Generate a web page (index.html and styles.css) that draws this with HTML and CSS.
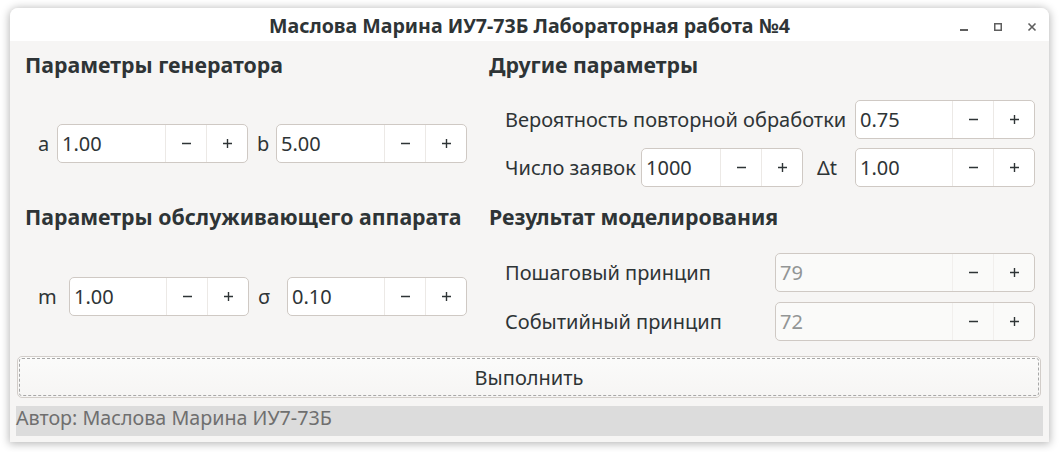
FILE: index.html
```html
<!DOCTYPE html>
<html lang="ru">
<head>
<meta charset="utf-8">
<title>Лабораторная работа №4</title>
<link rel="stylesheet" href="styles.css">
</head>
<body>
<div class="window">
  <header class="titlebar">
    <div class="tb-side"></div>
    <div class="title">Маслова Марина ИУ7-73Б Лабораторная работа №4</div>
    <div class="tb-side controls">
      <span class="ctl"><svg width="10" height="10" viewBox="0 0 10 10"><rect x="1" y="7" width="8" height="2" fill="#5e5e5e"/></svg></span>
      <span class="ctl"><svg width="10" height="10" viewBox="0 0 10 10"><rect x="1.75" y="1.75" width="6.5" height="6.5" fill="none" stroke="#5e5e5e" stroke-width="1.5"/></svg></span>
      <span class="ctl"><svg width="10" height="10" viewBox="0 0 10 10"><path d="M1.5 1.5 L8.5 8.5 M8.5 1.5 L1.5 8.5" stroke="#5e5e5e" stroke-width="1.6"/></svg></span>
    </div>
  </header>

  <main class="content">
    <div class="panels">
      <section class="col col-left">
        <h2 class="heading">Параметры генератора</h2>
        <div class="row row-ab">
          <span class="lbl lbl-a">a</span>
          <div class="spin w191">
            <span class="val">1.00</span>
            <span class="btn"><svg width="11" height="11" viewBox="0 0 11 11"><path d="M1 5.5 H10" stroke="#2e3436" stroke-width="1.4"/></svg></span>
            <span class="btn"><svg width="11" height="11" viewBox="0 0 11 11"><path d="M1 5.5 H10 M5.5 1 V10" stroke="#2e3436" stroke-width="1.4"/></svg></span>
          </div>
          <span class="lbl lbl-b">b</span>
          <div class="spin w191">
            <span class="val">5.00</span>
            <span class="btn"><svg width="11" height="11" viewBox="0 0 11 11"><path d="M1 5.5 H10" stroke="#2e3436" stroke-width="1.4"/></svg></span>
            <span class="btn"><svg width="11" height="11" viewBox="0 0 11 11"><path d="M1 5.5 H10 M5.5 1 V10" stroke="#2e3436" stroke-width="1.4"/></svg></span>
          </div>
        </div>

        <h2 class="heading heading-2l">Параметры обслуживающего аппарата</h2>
        <div class="row row-m">
          <span class="lbl lbl-m">m</span>
          <div class="spin w180">
            <span class="val">1.00</span>
            <span class="btn"><svg width="11" height="11" viewBox="0 0 11 11"><path d="M1 5.5 H10" stroke="#2e3436" stroke-width="1.4"/></svg></span>
            <span class="btn"><svg width="11" height="11" viewBox="0 0 11 11"><path d="M1 5.5 H10 M5.5 1 V10" stroke="#2e3436" stroke-width="1.4"/></svg></span>
          </div>
          <span class="lbl lbl-s">σ</span>
          <div class="spin w180">
            <span class="val">0.10</span>
            <span class="btn"><svg width="11" height="11" viewBox="0 0 11 11"><path d="M1 5.5 H10" stroke="#2e3436" stroke-width="1.4"/></svg></span>
            <span class="btn"><svg width="11" height="11" viewBox="0 0 11 11"><path d="M1 5.5 H10 M5.5 1 V10" stroke="#2e3436" stroke-width="1.4"/></svg></span>
          </div>
        </div>
      </section>

      <section class="col col-right">
        <h2 class="heading">Другие параметры</h2>
        <div class="rrow rrow-1">
          <span class="lbl lbl-prob">Вероятность повторной обработки</span>
          <div class="spin w180">
            <span class="val">0.75</span>
            <span class="btn"><svg width="11" height="11" viewBox="0 0 11 11"><path d="M1 5.5 H10" stroke="#2e3436" stroke-width="1.4"/></svg></span>
            <span class="btn"><svg width="11" height="11" viewBox="0 0 11 11"><path d="M1 5.5 H10 M5.5 1 V10" stroke="#2e3436" stroke-width="1.4"/></svg></span>
          </div>
        </div>
        <div class="rrow rrow-2">
          <span class="lbl lbl-count">Число заявок</span>
          <div class="spin w162">
            <span class="val">1000</span>
            <span class="btn"><svg width="11" height="11" viewBox="0 0 11 11"><path d="M1 5.5 H10" stroke="#2e3436" stroke-width="1.4"/></svg></span>
            <span class="btn"><svg width="11" height="11" viewBox="0 0 11 11"><path d="M1 5.5 H10 M5.5 1 V10" stroke="#2e3436" stroke-width="1.4"/></svg></span>
          </div>
          <span class="lbl lbl-dt">Δt</span>
          <div class="spin w180">
            <span class="val">1.00</span>
            <span class="btn"><svg width="11" height="11" viewBox="0 0 11 11"><path d="M1 5.5 H10" stroke="#2e3436" stroke-width="1.4"/></svg></span>
            <span class="btn"><svg width="11" height="11" viewBox="0 0 11 11"><path d="M1 5.5 H10 M5.5 1 V10" stroke="#2e3436" stroke-width="1.4"/></svg></span>
          </div>
        </div>

        <h2 class="heading heading-2r">Результат моделирования</h2>
        <div class="rrow rrow-3">
          <span class="lbl lbl-res">Пошаговый принцип</span>
          <div class="spin w260 disabled">
            <span class="val">79</span>
            <span class="btn"><svg width="11" height="11" viewBox="0 0 11 11"><path d="M1 5.5 H10" stroke="#2e3436" stroke-width="1.4"/></svg></span>
            <span class="btn"><svg width="11" height="11" viewBox="0 0 11 11"><path d="M1 5.5 H10 M5.5 1 V10" stroke="#2e3436" stroke-width="1.4"/></svg></span>
          </div>
        </div>
        <div class="rrow rrow-4">
          <span class="lbl lbl-res">Событийный принцип</span>
          <div class="spin w260 disabled">
            <span class="val">72</span>
            <span class="btn"><svg width="11" height="11" viewBox="0 0 11 11"><path d="M1 5.5 H10" stroke="#2e3436" stroke-width="1.4"/></svg></span>
            <span class="btn"><svg width="11" height="11" viewBox="0 0 11 11"><path d="M1 5.5 H10 M5.5 1 V10" stroke="#2e3436" stroke-width="1.4"/></svg></span>
          </div>
        </div>
      </section>
    </div>

    <button class="run" type="button">Выполнить</button>
    <div class="status">Автор: Маслова Марина ИУ7-73Б</div>
  </main>
</div>
</body>
</html>
```

FILE: styles.css
```css
* { box-sizing: border-box; }

html, body {
  margin: 0;
  padding: 0;
  background: #ffffff;
  width: 1059px;
  height: 452px;
  overflow: hidden;
  font-family: "Noto Sans", "Open Sans", sans-serif;
  color: #2e3436;
}

.window {
  position: absolute;
  left: 10px;
  top: 8px;
  width: 1039px;
  height: 434px;
  background: #f6f5f4;
  border-radius: 8px 8px 0 0;
  box-shadow: 0 1px 8px 1px rgba(0, 0, 0, 0.28);
  display: flex;
  flex-direction: column;
  overflow: hidden;
}

/* title bar */
.titlebar {
  height: 33px;
  flex: none;
  background: #ffffff;
  display: grid;
  grid-template-columns: 1fr auto 1fr;
  align-items: center;
}

.title {
  font-weight: 700;
  font-size: 19.6px;
  line-height: 22px;
  color: #2e3436;
  white-space: nowrap;
  padding-top: 3px;
}

.controls {
  display: flex;
  justify-content: flex-end;
  align-items: center;
  padding-top: 4px;
}

.ctl {
  width: 34px;
  height: 20px;
  display: flex;
  align-items: center;
  justify-content: center;
}

/* content */
.content {
  flex: 1;
  display: flex;
  flex-direction: column;
}

.panels {
  display: grid;
  grid-template-columns: 442px 546px;
  column-gap: 22px;
  padding: 11px 0 0 15px;
}

.col {
  display: flex;
  flex-direction: column;
}

.heading {
  margin: 0;
  font-size: 21.3px;
  font-weight: 700;
  line-height: 26px;
  color: #2e3436;
  white-space: nowrap;
}

.heading-2l { margin-top: 41px; }
.heading-2r { margin-top: 17px; }

.lbl {
  font-size: 20px;
  line-height: 26px;
  color: #2e3436;
  white-space: nowrap;
  flex: none;
}

/* left rows */
.row {
  display: flex;
  align-items: center;
  padding-left: 13px;
}

.row-ab { margin-top: 46px; }
.row-m { margin-top: 47px; }

.lbl-a { width: 19px; }
.lbl-b { width: 19px; margin-left: 9px; }
.lbl-m { width: 31px; }
.lbl-s { width: 29px; margin-left: 9px; }

/* right rows */
.rrow {
  display: flex;
  align-items: center;
  padding-left: 16px;
}

.rrow-1 { margin-top: 22px; }
.rrow-2 { margin-top: 9px; }
.rrow-3 { margin-top: 23px; }
.rrow-4 { margin-top: 10px; }

.lbl-prob { width: 350px; }
.lbl-count { width: 136px; }
.lbl-dt { width: 52px; padding-left: 14px; }
.lbl-res { width: 270px; }

/* spin buttons */
.spin {
  height: 39px;
  display: flex;
  flex: none;
  background: #ffffff;
  border: 1px solid #cfc9c4;
  border-radius: 5px;
  overflow: hidden;
}

.w191 { width: 191px; }
.w180 { width: 180px; }
.w162 { width: 162px; }
.w260 { width: 260px; }

.val {
  flex: 1;
  font-size: 20px;
  line-height: 37px;
  padding-left: 4px;
  color: #2e3436;
  white-space: nowrap;
}

.btn {
  width: 41px;
  flex: none;
  border-left: 1px solid #ece9e6;
  display: flex;
  align-items: center;
  justify-content: center;
}

.spin.disabled { background: #fafaf9; }
.spin.disabled .val { color: #929595; }
.spin.disabled .btn { border-left-color: #f1efed; }

/* run button */
.run {
  margin: 15px 0 0 7px;
  width: 1024px;
  height: 42px;
  flex: none;
  border: 1px solid #d2cdc9;
  border-radius: 5px;
  background: linear-gradient(#fbfbfa, #f6f5f4);
  font-family: "Noto Sans", "Open Sans", sans-serif;
  font-size: 20px;
  color: #2e3436;
  outline: 1px dashed #a7a7a7;
  outline-offset: -3px;
  padding: 0;
}

/* status bar */
.status {
  margin: 8px 0 0 6px;
  width: 1027px;
  height: 30px;
  flex: none;
  background: #dcdcdc;
  font-size: 19.7px;
  line-height: 23px;
  color: #6f6f6f;
  white-space: nowrap;
}
```
